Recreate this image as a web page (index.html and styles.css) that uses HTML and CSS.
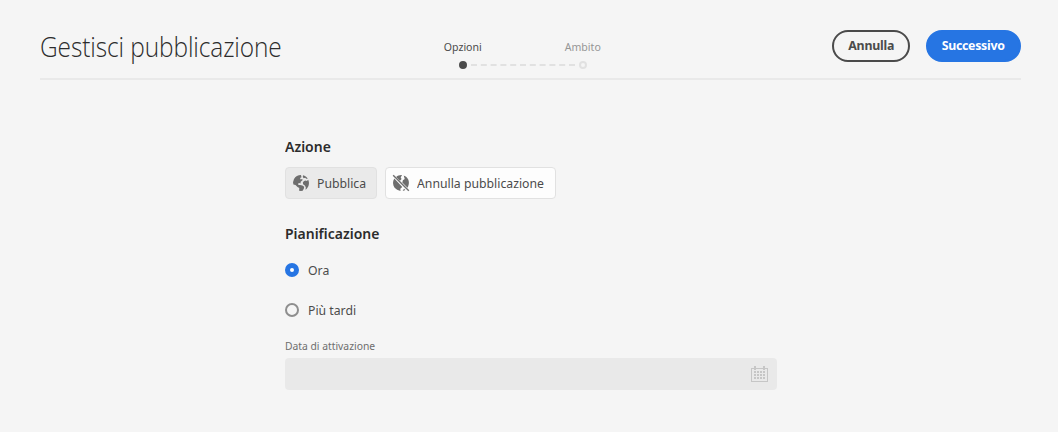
FILE: index.html
```html
<!DOCTYPE html>
<html lang="it">
<head>
<meta charset="utf-8">
<title>Gestisci pubblicazione</title>
<link rel="stylesheet" href="styles.css">
</head>
<body>
<div class="page">
<header class="header">
  <h1 class="title">Gestisci pubblicazione</h1>
  <div class="steps">
    <div class="step step-current"><span class="step-label">Opzioni</span><i class="marker"></i></div>
    <svg class="track" width="106" height="2" viewBox="0 0 106 2"><path d="M0 1h106" stroke="#e1e1e1" stroke-width="2" stroke-dasharray="6 3.8"/></svg>
    <div class="step"><span class="step-label">Ambito</span><i class="marker"></i></div>
  </div>
  <div class="actions">
    <button class="button cancel"><span>Annulla</span></button>
    <button class="button next"><span>Successivo</span></button>
  </div>
</header>
<main class="form">
  <h2 class="heading">Azione</h2>
  <div class="choices">
    <button class="choice selected">
      <svg class="globe" viewBox="0 0 18 18"><path fill="#6e6e6e" d="M9 1C6 1 3.4 2.5 2 4.9L1 8.3l.4 2.2 2.1.6 2 1.9 1.8 1.1-.2 2.6 1.9.3 1.7-.3 1.2-2.3.3-1.7-1.8-1.3-2.3-.5-1.5.2-.7-1.4 1.4-.6 1.2.3.2-1.6 2-1.7-.6-1-1.5.3-.5-1.3 1.4-.8z"/><path fill="#6e6e6e" d="M11 1.3c2.1.5 3.7 1.7 4.8 3.5l-1.6-.1-1-.9-1.5.4-.9-1.1zM16.2 5.7c.9 1.8 1 3.9.4 5.8-.5 1.7-1.6 3.2-3.1 4.3l.3-2.5-1-1.8-1.7-1.2-.3-1.9 1.2-1.5 1.8-.4 1 .4z"/></svg>
      <span>Pubblica</span>
    </button>
    <button class="choice">
      <svg class="globe" viewBox="0 0 18 18"><path fill="#6e6e6e" d="M2.3 4.6C.5 7.4.6 11 2.6 13.7l2.5 2.1 3.4 1.2-.2-2.2 2-1.8zM4.2 2.9 8 6.7l1.6-1.6-.9-1.6L10 1C7.8.8 5.9 1.5 4.2 2.9zM11.7 1.5l2.4 1.3c2.7 2.4 3.6 5.9 2.1 9.4l-.7 1.6-5.2-5.2.6-2.4 1.8-1.2zM12 14.7l1.4 1.3-2.7.9z"/><path d="M1.2 1.2l15.6 15.6" stroke="#6e6e6e" stroke-width="1.4"/></svg>
      <span>Annulla pubblicazione</span>
    </button>
  </div>
  <h2 class="heading schedule">Pianificazione</h2>
  <label class="option"><i class="radio checked"></i><span>Ora</span></label>
  <label class="option"><i class="radio"></i><span>Più tardi</span></label>
  <label class="field-label">Data di attivazione</label>
  <div class="date-field">
    <svg width="17" height="17" viewBox="0 0 17 17" shape-rendering="crispEdges"><path d="M.5 2.5h16v13H.5z" fill="none" stroke="#c6c6c6"/><path fill="#c6c6c6" d="M3 0h2v4H3zM12 0h2v4h-2zM3 5h2v2H3zM6 5h2v2H6zM9 5h2v2H9zM12 5h2v2h-2zM3 8h2v2H3zM6 8h2v2H6zM9 8h2v2H9zM12 8h2v2h-2zM3 11h2v2H3zM6 11h2v2H6zM9 11h2v2H9zM12 11h2v2h-2z"/></svg>
  </div>
</main>
</div>
</body>
</html>
```
FILE: styles.css
```css
* { box-sizing: border-box; }
body { margin: 0; background: #f5f5f5; color: #4b4b4b; font: 13px/20px "Noto Sans", "Open Sans", sans-serif; }
.page { height: 432px; padding: 14px 37px 0 40px; }
.header { height: 66px; display: grid; grid-template-columns: 393px 1fr auto; border-bottom: 2px solid #e9e9e9; }
.title { margin: 0; font: 300 27px/66px "Open Sans", sans-serif; letter-spacing: -.1px; color: #2c2c2c; white-space: nowrap; transform: scaleX(.905); transform-origin: left; }
.steps { display: flex; align-items: flex-start; padding-top: 23px; }
.step { width: 60px; flex: none; display: flex; flex-direction: column; align-items: center; font-size: 11px; line-height: 20px; color: #959595; }
.step-current { color: #4b4b4b; }
.step-label { transform: scaleX(.96); }
.marker { width: 8px; height: 8px; border: 2px solid #e1e1e1; border-radius: 50%; margin-top: 4px; }
.step-current .marker { background: #4b4b4b; border-color: #4b4b4b; }
.track { margin: 27px -23px 0 -22px; flex: none; }
.track + .step { margin-left: -1px; }
.actions { display: flex; gap: 16px; padding-top: 16px; }
button { font: inherit; color: inherit; }
.button { height: 32px; padding: 0; border: 2px solid #4b4b4b; border-radius: 16px; font-weight: 700; font-size: 13px; line-height: 24px; background: transparent; }
.button span { display: inline-block; transform: translateY(-1px) scaleX(.95); }
.cancel { width: 78px; letter-spacing: -.2px; }
.next { width: 95px; color: #fff; background: #2675e3; border-color: #2675e3; letter-spacing: -.3px; }
.form { width: 492px; margin: 56px 0 0 245px; }
.heading { margin: 0; font-size: 15px; line-height: 20px; font-weight: 600; color: #2c2c2c; transform: scaleX(.932); transform-origin: left; }
.choices { display: flex; gap: 8px; margin-top: 11px; }
.choice { height: 32px; display: flex; align-items: center; border: 1px solid #e1e1e1; border-radius: 4px; padding: 0 0 0 6px; gap: 7px; width: 171px; background: #fdfdfd; white-space: nowrap; }
.choice.selected { width: 92px; background: #eaeaea; }
.choice span, .option span { transform: scaleX(.942); transform-origin: left; }
.globe { width: 18px; height: 18px; flex: none; }
.schedule { margin-top: 24px; }
.option { height: 40px; display: flex; align-items: center; gap: 9px; }
.schedule + .option { margin-top: 7px; }
.radio { width: 14px; height: 14px; border: 2px solid #8e8e8e; border-radius: 50%; }
.radio.checked { border: 5px solid #2675e3; background: #fff; }
.field-label { display: block; height: 20px; margin-top: 6px; font-size: 11px; line-height: 20px; color: #6e6e6e; transform: scaleX(.938); transform-origin: left; }
.date-field { height: 32px; margin-top: 2px; border-radius: 4px; background: #e9e9e9; display: flex; align-items: center; justify-content: flex-end; padding-right: 9px; }
```
